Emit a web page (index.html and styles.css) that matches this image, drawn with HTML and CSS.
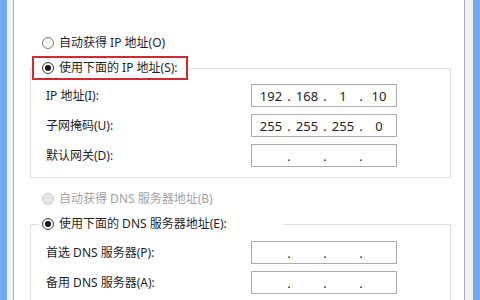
FILE: index.html
```html
<!DOCTYPE html>
<html lang="zh-CN">
<head>
    <meta charset="UTF-8">
    <title>Internet 协议版本 4 (TCP/IPv4) 属性</title>
    <link rel="stylesheet" href="styles.css">
</head>
<body>

    <div class="window">
        <div class="frame frame--left"></div>
        <div class="edge edge--left"></div>

        <!-- Dialog pane -->
        <div class="pane">
            <label class="radio-row">
                <span class="radio"></span>自动获得 IP 地址(O)
            </label>

            <fieldset class="group group--ip">
                <legend class="group__legend group__legend--marked">
                    <span class="legend__inner"><span class="radio radio--checked"></span>使用下面的 IP 地址(S):</span>
                </legend>
                <div class="field">
                    <span class="field__label">IP 地址(I):</span>
                    <div class="ip-box">
                        <span class="ip-box__seg">192</span><span class="ip-box__dot">.</span>
                        <span class="ip-box__seg">168</span><span class="ip-box__dot">.</span>
                        <span class="ip-box__seg">1</span><span class="ip-box__dot">.</span>
                        <span class="ip-box__seg">10</span>
                    </div>
                </div>
                <div class="field">
                    <span class="field__label">子网掩码(U):</span>
                    <div class="ip-box">
                        <span class="ip-box__seg">255</span><span class="ip-box__dot">.</span>
                        <span class="ip-box__seg">255</span><span class="ip-box__dot">.</span>
                        <span class="ip-box__seg">255</span><span class="ip-box__dot">.</span>
                        <span class="ip-box__seg">0</span>
                    </div>
                </div>
                <div class="field">
                    <span class="field__label">默认网关(D):</span>
                    <div class="ip-box">
                        <span class="ip-box__seg"></span><span class="ip-box__dot">.</span>
                        <span class="ip-box__seg"></span><span class="ip-box__dot">.</span>
                        <span class="ip-box__seg"></span><span class="ip-box__dot">.</span>
                        <span class="ip-box__seg"></span>
                    </div>
                </div>
            </fieldset>

            <label class="radio-row radio-row--dns radio-row--disabled">
                <span class="radio radio--disabled"></span>自动获得 DNS 服务器地址(B)
            </label>

            <fieldset class="group group--dns">
                <legend class="group__legend group__legend--plain">
                    <span class="legend__inner"><span class="radio radio--checked"></span>使用下面的 DNS 服务器地址(E):</span>
                </legend>
                <div class="field">
                    <span class="field__label">首选 DNS 服务器(P):</span>
                    <div class="ip-box">
                        <span class="ip-box__seg"></span><span class="ip-box__dot">.</span>
                        <span class="ip-box__seg"></span><span class="ip-box__dot">.</span>
                        <span class="ip-box__seg"></span><span class="ip-box__dot">.</span>
                        <span class="ip-box__seg"></span>
                    </div>
                </div>
                <div class="field">
                    <span class="field__label">备用 DNS 服务器(A):</span>
                    <div class="ip-box">
                        <span class="ip-box__seg"></span><span class="ip-box__dot">.</span>
                        <span class="ip-box__seg"></span><span class="ip-box__dot">.</span>
                        <span class="ip-box__seg"></span><span class="ip-box__dot">.</span>
                        <span class="ip-box__seg"></span>
                    </div>
                </div>
            </fieldset>
        </div>

        <div class="edge edge--right"></div>
        <div class="frame frame--right"></div>
    </div>

</body>
</html>
```

FILE: styles.css
```css
body {
    margin: 0;
    padding: 0;
    background-color: #ffffff;
    color: #1e1e1e;
    font-family: "Noto Sans", "Noto Sans CJK SC", sans-serif;
    font-size: 12px;
    line-height: 20px;
}

/* Window chrome */
.window {
    display: flex;
    width: 480px;
    height: 300px;
    overflow: hidden;
}

.frame {
    background-color: #71a8ef;
}

.frame--left {
    width: 7px;
}

.frame--right {
    width: 7px;
}

.edge {
    background-color: #eef3fa;
}

.edge--left {
    width: 6px;
}

.edge--right {
    width: 8px;
    background-color: #f1f2f3;
}

.pane {
    flex: 1;
    padding-top: 33px;
    border-left: 1px solid #a9adb3;
    border-right: 1px solid #a9adb3;
    background-color: #ffffff;
}

/* Radio buttons */
.radio-row {
    display: flex;
    align-items: center;
    height: 20px;
    padding-left: 28px;
    white-space: nowrap;
}

.radio-row--disabled {
    color: #a2a2a2;
}

.radio-row--dns {
    margin-top: 11px;
}

.radio {
    position: relative;
    box-sizing: border-box;
    width: 12px;
    height: 12px;
    margin-right: 5px;
    border: 1px solid #7b7b7b;
    border-radius: 50%;
    background: linear-gradient(#ececec, #ffffff);
    flex-shrink: 0;
}

.radio--checked {
    border-color: #3c3c3c;
}

.radio--checked::after {
    content: "";
    position: absolute;
    top: 2px;
    left: 2px;
    width: 6px;
    height: 6px;
    border-radius: 50%;
    background-color: #1a1a1a;
}

.radio--disabled {
    border-color: #cacaca;
    background: #e6e6e6;
}

/* Group boxes */
.group {
    margin: 3px 13px 0 16px;
    padding: 0 0 10px 0;
    border: 1px solid #dedede;
    min-width: 0;
}

.group--dns {
    margin-top: 5px;
}

.group__legend {
    padding: 0;
    white-space: nowrap;
}

.legend__inner {
    display: flex;
    align-items: center;
    height: 20px;
}

.group__legend--marked {
    margin-left: 1px;
    padding: 0 8px 0 8px;
    border: 2px solid #d02a2e;
}

.group__legend--plain {
    margin-left: 8px;
    padding: 0 57px 0 3px;
}

.group--ip .field:first-of-type {
    margin-top: 4px;
}

.group--dns .field:first-of-type {
    margin-top: 7px;
}

/* Address rows */
.field {
    display: flex;
    align-items: center;
    height: 23px;
    margin-top: 7px;
    padding-left: 15px;
}

.field__label {
    width: 205px;
    white-space: nowrap;
}

.ip-box {
    box-sizing: border-box;
    display: flex;
    align-items: center;
    width: 146px;
    height: 23px;
    padding-left: 4px;
    border: 1px solid #acacac;
    font-size: 13px;
    color: #1e1e1e;
}

.ip-box__seg {
    width: 30px;
    text-align: center;
}

.ip-box__dot {
    width: 6px;
    text-align: center;
}
```
